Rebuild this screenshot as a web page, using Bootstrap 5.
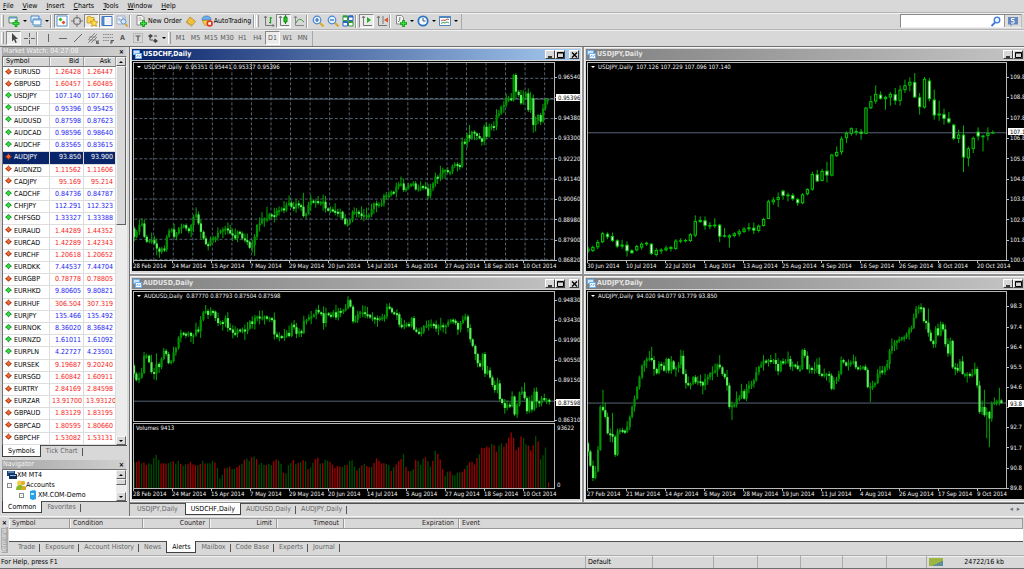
<!DOCTYPE html>
<html lang="en">
<head>
<meta charset="utf-8">
<meta name="viewport" content="width=device-width, initial-scale=1">
<title>XM MT4</title>
<link href="https://cdn.jsdelivr.net/npm/bootstrap@5.3.0/dist/css/bootstrap.min.css" rel="stylesheet">
<style>
  :root { --face:#d8d8d8; --shade:#808080; --edge:#a8a8a8; --navy:#0a246a; }
  body { min-height:100vh; background:var(--face); color:#000; font-family:"DejaVu Sans Condensed","DejaVu Sans",sans-serif; font-size:7px; line-height:10px; overflow-x:hidden; }
  button, input { font:inherit; }
  .menubar { height:12px; padding-left:3px; line-height:13px; }
  .menubar a { color:#000; text-decoration:none; padding:0 5px 0 0; margin-right:4px; }
  .menubar u { text-underline-offset:1px; }
  .toolrow { height:17px; border-top:1px solid #b4b4b4; box-shadow:inset 0 1px #f0f0f0; padding-right:2px; }
  .toolset { height:15px; border-right:1px solid var(--edge); padding-right:2px; }
  .btn.tool { --bs-btn-padding-x:0; --bs-btn-padding-y:0; --bs-btn-font-size:7px; --bs-btn-line-height:10px; --bs-btn-border-radius:0; --bs-btn-color:#000; width:15px; height:14px; border:1px solid transparent; display:flex; align-items:center; justify-content:center; gap:1px; flex:none; white-space:nowrap; }
  .btn.tool.pressed { background:#ececec; border-color:#888 #fff #fff #888; }
  .btn.tool.drop { width:22px; gap:3px; }
  .btn.tool.wordy { width:auto; padding:0 1px; }
  .btn.tool.period { color:#555; }
  .btn.tool.period.w16 { width:16px; }
  .tool svg { width:12px; height:12px; flex:none; }
  .caret { border:2px solid transparent; border-top-color:#000; border-bottom:0; }
  .grip { width:3px; height:12px; border-left:1px solid #fff; border-right:1px solid #999; margin:0 2px 0 1px; flex:none; }
  .rule { width:2px; height:13px; border-left:1px solid #999; border-right:1px solid #fff; margin:0 2px 0 0; flex:none; }
  .finder { width:122px; height:14px; border:1px solid #888; border-right-color:#bbb; border-bottom-color:#eee; }
  .finder input { border:0; outline:0; min-width:0; padding:0 3px; background:#fff; }
  .finder label { background:#fff; width:14px; }
  .finder svg { width:12px; height:11px; }
  .finder button { border:0; border-left:1px solid #999; background:#dcdcdc; width:17px; padding:0; }

  main { border-top:1px solid #707070; min-height:0; }
  .dock { width:130px; padding:0 2px; border-right:1px solid #707070; flex:none; }
  .dock-title { height:9px; background:linear-gradient(90deg,#a8a8a8,#d0d0d0); color:#f4f4f4; line-height:8px; padding-left:1px; margin-right:1px; }
  .dock-title.second { margin-top:3px; }
  .xbtn { border:0; background:none; padding:0; width:9px; height:9px; line-height:8px; font-weight:bold; color:#000; }
  .sunk { border:1px solid #707070; border-right-color:#eee; border-bottom:0; background:#fff; }
  .quotes { border-collapse:separate; border-spacing:0; width:115px; table-layout:fixed; line-height:11px; }
  .quotes th { height:10px; line-height:9px; background:var(--face); font-weight:normal; border-right:1px solid #999; border-bottom:1px solid #777; box-shadow:inset 1px 1px #f2f2f2; padding:0 4px 0 3px; }
  .quotes td { border-right:1px solid #ddd; border-bottom:1px solid #ddd; padding:0 2px; text-align:right; vertical-align:middle; white-space:nowrap; overflow:hidden; }
  .quotes td:first-child { text-align:left; }
  .quotes td svg { width:7px; height:7px; margin:0 2px 2px 0; vertical-align:middle; }
  .quotes .up td { color:#2020f0; } .quotes .down td { color:#f42020; }
  .quotes tr td:first-child { color:#000; }
  .quotes .picked td, .quotes .picked td:first-child { background:var(--navy); color:#fff; }
  .scroller { width:10px; background:#ececec; }
  .scroller button, .thumb { width:10px; height:9px; padding:0; border:1px solid #f4f4f4; border-right-color:#606060; border-bottom-color:#606060; background:var(--face); display:flex; align-items:center; justify-content:center; flex:none; }
  .scroller .thumb { height:auto; }
  .tri { border:2px solid transparent; border-top:0; border-bottom-color:#000; }
  .tri.dn { border-bottom:0; border-top:2px solid #000; }
  .tabstrip { height:12px; border-top:1px solid #505050; color:#666; line-height:11px; }
  .dock .tabstrip.last { margin-bottom:3px; }
  .tabstrip a { color:#666; text-decoration:none; padding:0 5px; white-space:nowrap; position:relative; }
  .tabstrip a.bar::after { content:""; border-right:1px solid #555; position:absolute; right:0; top:2px; height:8px; }
  .tabstrip a.on { background:#fff; color:#000; border:1px solid #404040; border-top:0; margin-top:-1px; line-height:12px; height:12px; }
  .tree { height:31px; overflow:hidden; line-height:10px; }
  .tree svg { width:10px; height:10px; flex:none; }
  .box { width:5px; height:5px; border:1px solid #888; line-height:3px; font-size:5px; text-align:center; flex:none; }

  .desk { background:#909090; display:grid; gap:2px; padding-bottom:1px; grid-template-columns:minmax(0,452fr) minmax(0,440fr); grid-template-rows:minmax(160px,228fr) minmax(160px,226fr); min-width:0; }
  .pane { background:var(--face); border:1px solid #f4f4f4; padding:1px 1px 2px; min-width:0; min-height:0; }
  .pane.edge { border-right:0; padding-right:0; }
  .pane-title { height:11px; background:linear-gradient(90deg,#808080,#c4c4c4); color:#e4e4e4; font-weight:bold; line-height:11px; padding:0 1px; }
  .pane.active .pane-title { background:linear-gradient(90deg,#0a246a,#a6caf0); color:#fff; }
  .pane-title svg.wi { width:9px; height:9px; margin-right:1px; }
  .wbtn { width:10px; height:9px; padding:0; border:1px solid #fff; border-right-color:#404040; border-bottom-color:#404040; background:var(--face); display:flex; align-items:center; justify-content:center; }
  .wbtn svg { width:7px; height:6px; }
  .chart { background:#000; color:#f0f0f0; margin-top:1px; padding:1px 0 0 1px; font-size:6px; line-height:8px; display:grid; grid-template-columns:minmax(0,1fr) 25px; grid-template-rows:minmax(0,1fr) 10px; position:relative; flex:1; min-height:0; }
  .edge .chart { grid-template-columns:minmax(0,1fr) 17px; }
  .plot { position:relative; min-height:0; min-width:0; display:flex; flex-direction:column; }
  .plot svg { width:100%; height:100%; min-height:0; border:1px solid #b8b8b8; display:block; }
  .plot .main { flex:133 1 0; } .plot .vol { flex:66 1 0; margin-top:1px; }
  .caption { position:absolute; left:4px; top:1px; display:flex; align-items:center; gap:3px; white-space:nowrap; }
  .caption.lower { left:3px; top:67%; }
  .caption .caret { border-top-color:#fff; }
  .prices { position:relative; min-width:0; padding-top:11px; margin-bottom:-3px; overflow:hidden; white-space:nowrap; }
  .prices span::before { content:""; display:inline-block; width:2px; height:1px; background:#c0c0c0; vertical-align:middle; margin-right:1px; }
  .prices.split { padding-top:5px; padding-bottom:68px; }
  .volscale { position:absolute; left:2px; bottom:3px; height:65px; }
  .prices .volscale span::before { display:none; }
  .tag { position:absolute; left:1px; right:0; padding-left:2px; margin-top:-4px; line-height:7px; height:7px; background:#fff; color:#000; }
  .times { grid-column:1 / -1; overflow:hidden; white-space:nowrap; padding-top:1px; }
  .times span { flex:0 0 39px; position:relative; }
  .times span::before { content:""; position:absolute; left:0; top:-1px; width:1px; height:2px; background:#c0c0c0; }
  .pagetabs { height:13px; }
  .pagetabs a:first-child { padding:0 7px; }

  .terminal { border-top:1px solid #f4f4f4; padding:1px 1px 2px 0; }
  .side { width:9px; flex:none; }
  .side span { writing-mode:vertical-rl; transform:rotate(180deg); background:#a8a8a8; color:#e8e8e8; width:7px; line-height:7px; height:26px; overflow:hidden; }
  .alerts { width:100%; table-layout:fixed; border-collapse:separate; border-spacing:0; background:#fff; }
  .alerts th { height:10px; line-height:9px; background:var(--face); font-weight:normal; border:1px solid #999; border-left:0; box-shadow:inset 1px 0 #f2f2f2; padding:0 4px 0 3px; color:#2b1a1a; }
  .alerts td { height:12px; padding:0; }
  .status { height:14px; border-top:1px solid #aaa; border-bottom:1px solid #707070; line-height:13px; box-shadow:inset 0 1px #f2f2f2; white-space:nowrap; }
  .status > span { border-left:1px solid #aaa; padding-left:2px; flex:none; }
  .status > span:first-child { border:0; padding-left:1px; }
</style>
</head>
<body class="d-flex flex-column">

<svg width="0" height="0" class="position-absolute" aria-hidden="true">
  <symbol id="i-add" viewBox="0 0 12 12"><path d="M1 2h8v6H1z" fill="#eef6ee" stroke="#4c8a5a"/><path d="M1 2h8v1.500H1z" fill="#5c9fd0"/><path d="M8 5v7M4.500 8.500h7" stroke="#0a9c12" stroke-width="2.600"/><path d="M8 6v5M5.500 8.500h5" stroke="#3ce23c"/></symbol>
  <symbol id="i-profiles" viewBox="0 0 12 12"><path d="M1 1h8v6H1z" fill="#e4f0fb" stroke="#4b88c8"/><path d="M3 4h8v6H3z" fill="#f4f9ff" stroke="#4b88c8"/><path d="M3 4h8v1.500H3z" fill="#6ca6dc"/><path d="M4 11.500h8" stroke="#7aa"/></symbol>
  <symbol id="i-watch" viewBox="0 0 12 12"><path d="M1 1h10v10H1z" fill="#fff" stroke="#5590cf"/><path d="M4.500 2.500l2 2-2 2-2-2z" fill="#2fb52f"/><path d="M7.500 5.500l2 2-2 2-2-2z" fill="#e4502c"/></symbol>
  <symbol id="i-target" viewBox="0 0 12 12"><circle cx="6" cy="6" r="3.500" fill="none" stroke="#777" stroke-width="1.200"/><path d="M6 0v4M6 8v4M0 6h4M8 6h4" stroke="#777"/></symbol>
  <symbol id="i-star" viewBox="0 0 12 12"><path d="M1 2l3-1 1 1.500h3V8H1z" fill="#f8d44c" stroke="#c09020" stroke-width=".7"/><path d="M8 4l1.200 2.500 2.700.3-2 1.900.5 2.800L8 10.200 5.600 11.500l.5-2.800-2-1.900 2.700-.3z" fill="#ffdc48" stroke="#b88a18" stroke-width=".7"/></symbol>
  <symbol id="i-panel" viewBox="0 0 12 12"><path d="M1 1.500h10v9H1z" fill="#fff" stroke="#3b74bd"/><path d="M1 1.500h2.500v9H1z" fill="#4d86cc"/><path d="M5 4h5M5 6h5M5 8h5" stroke="#dde6f2"/></symbol>
  <symbol id="i-tester" viewBox="0 0 12 12"><path d="M1 1h8v8H1z" fill="#eef2f8" stroke="#9cb0c8"/><path d="M3 6V3M5 7V4M7 6V2" stroke="#7d96b8"/><circle cx="7.500" cy="6.500" r="2.500" fill="#cfe6fa" stroke="#6898c8"/><path d="M9.500 9l2 2.500" stroke="#d8a020" stroke-width="1.800"/></symbol>
  <symbol id="i-order" viewBox="0 0 12 12"><path d="M2 .5h5l2 2V10H2z" fill="#f8f8f8" stroke="#888"/><path d="M3.500 3h3M3.500 5h4" stroke="#aaa"/><path d="M8.500 5v7M5 8.500h7" stroke="#0a9c12" stroke-width="2.600"/><path d="M8.500 6v5M6 8.500h5" stroke="#3ce23c"/></symbol>
  <symbol id="i-meta" viewBox="0 0 12 12"><path d="M1.500 7L5 2l5.500 4.500-3.500 4z" fill="#f0c040" stroke="#b88418" stroke-width=".8"/><path d="M1.500 7l5.500 3.500v1L1.500 8z" fill="#fff4c0" stroke="#a87810" stroke-width=".5"/></symbol>
  <symbol id="i-auto" viewBox="0 0 12 12"><path d="M1 5q0-4 4.500-4T10 5z" fill="#6cb0e8" stroke="#3a78b8" stroke-width=".7"/><path d="M1 5.500h8.500L8 9.500l-4 1z" fill="#f4cc50" stroke="#b88a20" stroke-width=".7"/><circle cx="8.700" cy="8.500" r="3.200" fill="#e03820"/><path d="M7.300 7.200H10v2.600H7.300z" fill="#fff"/></symbol>
  <symbol id="i-bars" viewBox="0 0 12 12"><path d="M2.500 1v9.500H11M1 3l1.500-2L4 3M9.500 9l1.500 1.500L9.500 12" fill="none" stroke="#777"/><path d="M7.500 2v6.500M6 7.500h1.500M7.500 3H9" stroke="#16a016" stroke-width="1.200"/></symbol>
  <symbol id="i-candles" viewBox="0 0 12 12"><path d="M2.500 1v9.500H11M1 3l1.500-2L4 3" fill="none" stroke="#777"/><path d="M7.500 0v9" stroke="#0c860c"/><path d="M6 2h3v5H6z" fill="#2ac82a" stroke="#0c860c"/></symbol>
  <symbol id="i-line" viewBox="0 0 12 12"><path d="M2.500 1v9.500H11M1 3l1.500-2L4 3" fill="none" stroke="#888"/><path d="M3 8q3-7 8-1" fill="none" stroke="#3a9c3a"/></symbol>
  <symbol id="i-zin" viewBox="0 0 12 12"><path d="M7.500 7.500l4 4" stroke="#d8a828" stroke-width="2"/><circle cx="5" cy="5" r="3.800" fill="#e4f2ff" stroke="#4a88d0" stroke-width="1.200"/><path d="M5 3v4M3 5h4" stroke="#2c68c0" stroke-width="1.200"/></symbol>
  <symbol id="i-zout" viewBox="0 0 12 12"><path d="M7.500 7.500l4 4" stroke="#d8a828" stroke-width="2"/><circle cx="5" cy="5" r="3.800" fill="#e4f2ff" stroke="#4a88d0" stroke-width="1.200"/><path d="M3 5h4" stroke="#2c68c0" stroke-width="1.200"/></symbol>
  <symbol id="i-tile" viewBox="0 0 12 12"><path d="M1 1h4.500v4.500H1zM6.500 6.500H11V11H6.500z" fill="#fff" stroke="#2f9c3c"/><path d="M6.500 1H11v4.500H6.500zM1 6.500h4.500V11H1z" fill="#fff" stroke="#2c64c0"/><path d="M1 1.500h4.500M6.500 7H11" stroke="#2f9c3c" stroke-width="2"/><path d="M6.500 1.500H11M1 7h4.500" stroke="#2c64c0" stroke-width="2"/></symbol>
  <symbol id="i-scroll" viewBox="0 0 12 12"><path d="M2.500 1v9.500H11M1 3l1.500-2L4 3" fill="none" stroke="#777"/><path d="M6 2l4 3-4 3z" fill="#22b022"/></symbol>
  <symbol id="i-shift" viewBox="0 0 12 12"><path d="M2.500 1v9.500H11M1 3l1.500-2L4 3M7 1v8" fill="none" stroke="#777"/><path d="M12 2.500L8 5l4 2.500z" fill="#d8542c"/></symbol>
  <symbol id="i-ind" viewBox="0 0 12 12"><path d="M1.500.5h5l2 2V9h-7z" fill="#f4f4f4" stroke="#888"/><path d="M3 7q2 0 2-5" stroke="#777" fill="none"/><path d="M8.500 5v7M5 8.500h7" stroke="#0a9c12" stroke-width="2.600"/><path d="M8.500 6v5M6 8.500h5" stroke="#3ce23c"/></symbol>
  <symbol id="i-clock" viewBox="0 0 12 12"><circle cx="6" cy="6" r="4.700" fill="#f4faff" stroke="#2c74c4" stroke-width="1.800"/><path d="M6 3v3h2.500" fill="none" stroke="#456"/></symbol>
  <symbol id="i-tpl" viewBox="0 0 12 12"><path d="M.5 1.500h11v9H.5z" fill="#fff" stroke="#4f86bb"/><path d="M.5 2h11" stroke="#4f86bb" stroke-width="2"/><path d="M2 6l2-1 2 .5L8 4l2 .5" stroke="#c05040" fill="none"/><path d="M2 8.500l2-1 2 .5L8 7l2 1" stroke="#40a050" fill="none"/></symbol>
  <symbol id="i-arrow" viewBox="0 0 12 12"><path d="M4 1v8.500l2-2 1.400 3.500 1.400-.6L7.400 7H10z" fill="#444"/></symbol>
  <symbol id="i-cross" viewBox="0 0 12 12"><path d="M6.500 1v4M6.500 8v4M1 6.500h4M8 6.500h4M6 6.500h1" stroke="#666"/></symbol>
  <symbol id="i-v" viewBox="0 0 12 12"><path d="M6.500 2v8" stroke="#666"/></symbol>
  <symbol id="i-h" viewBox="0 0 12 12"><path d="M2 6.500h8" stroke="#666"/></symbol>
  <symbol id="i-s" viewBox="0 0 12 12"><path d="M2 10l8-8" stroke="#666"/></symbol>
  <symbol id="i-ch" viewBox="0 0 12 12"><path d="M1 8l7-7M1 11l9-9M4 11l6-6M2 5h7M2 8h7" stroke="#777" stroke-width=".8"/><path d="M12 9H9.500v2.500H12M9.500 10.200H12" fill="none" stroke="#444" stroke-width=".8"/></symbol>
  <symbol id="i-fib" viewBox="0 0 12 12"><path d="M1 2.500h10M1 5.500h10M1 8.500h6" stroke="#888" stroke-dasharray="1.500 .7"/><path d="M9 12V8.500h3M9 10h2" stroke="#555" fill="none"/></symbol>
  <symbol id="i-T" viewBox="0 0 12 12"><path d="M1.500 1.500h9v9h-9z" fill="none" stroke="#999" stroke-dasharray="1 1"/><path d="M3.500 4h5M6 4v5" stroke="#555" stroke-width="1.200"/></symbol>
  <symbol id="i-arrows" viewBox="0 0 12 12"><path d="M1 4l2.500-2L6 4 3.500 6zM6 9l2-2.500L11 9l-2.500 2z" fill="#444"/><path d="M3 5v3h3M7 4h3" stroke="#555" fill="none"/></symbol>
  <symbol id="i-win" viewBox="0 0 9 9"><path d="M.5.500h6v4h-6z" fill="#cfe6fc" stroke="#6ab0ee"/><path d="M2.500 3.500h6v5h-6z" fill="#fff" stroke="#6ab0ee"/><path d="M3.500 6.500l1.500-1 1 1 1.500-1" stroke="#5a96d0" fill="none"/></symbol>
  <symbol id="i-min" viewBox="0 0 7 6"><path d="M1 5h4" stroke="#000" stroke-width="1.500"/></symbol>
  <symbol id="i-max" viewBox="0 0 7 6"><path d="M.5.500h6v5h-6z" fill="none" stroke="#000"/><path d="M.5 1h6" stroke="#000"/></symbol>
  <symbol id="i-x" viewBox="0 0 7 6"><path d="M1 .5l5 5M6 .5l-5 5" stroke="#000" stroke-width="1.400"/></symbol>
  <symbol id="q-up" viewBox="0 0 7 7"><path d="M3.500 0L7 3.300 5 4.500 3.500 6.500 2 4.500 0 3.300z" fill="#169c28"/><path d="M3.500 1L5.500 3.300 3.500 5 1.500 3.300z" fill="#3cdc48"/></symbol>
  <symbol id="q-down" viewBox="0 0 7 7"><path d="M3.500 6.800L0 3.500 2 2.300 3.500.2 5 2.300 7 3.500z" fill="#b83a14"/><path d="M3.500 1.200L5.200 3.500 3.500 5.500 1.800 3.500z" fill="#f0703c"/></symbol>
</svg>

<nav class="menubar d-flex" aria-label="Menu">
  <a href="#"><u>F</u>ile</a><a href="#"><u>V</u>iew</a><a href="#"><u>I</u>nsert</a><a href="#"><u>C</u>harts</a><a href="#"><u>T</u>ools</a><a href="#"><u>W</u>indow</a><a href="#"><u>H</u>elp</a>
</nav>

<div class="toolrow d-flex justify-content-between align-items-center">
  <div class="toolset d-flex align-items-center" role="toolbar" aria-label="Standard">
    <i class="grip"></i>
    <button class="btn tool drop" aria-label="New chart"><svg><use href="#i-add"/></svg><i class="caret"></i></button>
    <button class="btn tool drop" aria-label="Profiles"><svg><use href="#i-profiles"/></svg><i class="caret"></i></button>
    <i class="rule"></i>
    <button class="btn tool pressed" aria-label="Market Watch"><svg><use href="#i-watch"/></svg></button>
    <button class="btn tool" aria-label="Data Window"><svg><use href="#i-target"/></svg></button>
    <button class="btn tool pressed" aria-label="Navigator"><svg><use href="#i-star"/></svg></button>
    <button class="btn tool pressed" aria-label="Terminal"><svg><use href="#i-panel"/></svg></button>
    <button class="btn tool" aria-label="Strategy Tester"><svg><use href="#i-tester"/></svg></button>
    <i class="rule"></i>
    <button class="btn tool wordy"><svg><use href="#i-order"/></svg>New Order</button>
    <button class="btn tool" aria-label="MetaEditor"><svg><use href="#i-meta"/></svg></button>
    <button class="btn tool wordy"><svg><use href="#i-auto"/></svg>AutoTrading</button>
    <i class="rule me-0"></i><i class="grip"></i>
    <button class="btn tool" aria-label="Bar chart"><svg><use href="#i-bars"/></svg></button>
    <button class="btn tool pressed" aria-label="Candlesticks"><svg><use href="#i-candles"/></svg></button>
    <button class="btn tool" aria-label="Line chart"><svg><use href="#i-line"/></svg></button>
    <i class="rule"></i>
    <button class="btn tool" aria-label="Zoom in"><svg><use href="#i-zin"/></svg></button>
    <button class="btn tool" aria-label="Zoom out"><svg><use href="#i-zout"/></svg></button>
    <button class="btn tool" aria-label="Tile windows"><svg><use href="#i-tile"/></svg></button>
    <i class="rule"></i>
    <button class="btn tool pressed" aria-label="Auto scroll"><svg><use href="#i-scroll"/></svg></button>
    <button class="btn tool" aria-label="Chart shift"><svg><use href="#i-shift"/></svg></button>
    <i class="rule"></i>
    <button class="btn tool drop" aria-label="Indicators"><svg><use href="#i-ind"/></svg><i class="caret"></i></button>
    <button class="btn tool drop" aria-label="Periods"><svg><use href="#i-clock"/></svg><i class="caret"></i></button>
    <button class="btn tool drop" aria-label="Templates"><svg><use href="#i-tpl"/></svg><i class="caret"></i></button>
  </div>
  <div class="finder d-flex">
    <input id="find" type="text" class="flex-grow-1" aria-label="Search">
    <label for="find" class="d-flex align-items-center"><svg viewBox="0 0 12 11"><circle cx="7" cy="4" r="2.800" fill="#eaf3ff" stroke="#3f78d8" stroke-width="1.300"/><path d="M5 6.500L1.500 10" stroke="#3f78d8" stroke-width="1.800"/></svg></label>
    <button class="d-flex align-items-center justify-content-center" aria-label="Messages"><svg viewBox="0 0 12 11"><path d="M1 1h10v7.500H5L3.500 11V8.500H1z" fill="#6487bd"/><path d="M7.500 2.500h-3v2h2.500v2.500h-3" stroke="#fff" fill="none"/></svg></button>
  </div>
</div>

<div class="toolrow d-flex align-items-center">
  <div class="toolset d-flex align-items-center" role="toolbar" aria-label="Line studies and periods">
    <i class="grip"></i>
    <button class="btn tool pressed" aria-label="Cursor"><svg><use href="#i-arrow"/></svg></button>
    <button class="btn tool" aria-label="Crosshair"><svg><use href="#i-cross"/></svg></button>
    <i class="rule"></i>
    <button class="btn tool" aria-label="Vertical line"><svg><use href="#i-v"/></svg></button>
    <button class="btn tool" aria-label="Horizontal line"><svg><use href="#i-h"/></svg></button>
    <button class="btn tool" aria-label="Trendline"><svg><use href="#i-s"/></svg></button>
    <button class="btn tool" aria-label="Channel"><svg><use href="#i-ch"/></svg></button>
    <button class="btn tool" aria-label="Fibonacci"><svg><use href="#i-fib"/></svg></button>
    <button class="btn tool period fw-bold">A</button>
    <button class="btn tool" aria-label="Text label"><svg><use href="#i-T"/></svg></button>
    <button class="btn tool drop" aria-label="Arrows"><svg><use href="#i-arrows"/></svg><i class="caret"></i></button>
    <i class="grip"></i>
    <button class="btn tool period">M1</button><button class="btn tool period">M5</button><button class="btn tool period w16">M15</button><button class="btn tool period w16">M30</button><button class="btn tool period">H1</button><button class="btn tool period">H4</button><button class="btn tool period pressed">D1</button><button class="btn tool period">W1</button><button class="btn tool period">MN</button>
  </div>
</div>

<main class="d-flex flex-grow-1">
  <aside class="dock d-flex flex-column">
    <div class="dock-title d-flex justify-content-between"><span>Market Watch: 04:27:08</span><button class="xbtn" aria-label="Close Market Watch">×</button></div>
    <div class="sunk d-flex flex-grow-1">
      <table class="quotes">
        <colgroup><col style="width:47px"><col style="width:34px"><col></colgroup>
        <thead><tr><th>Symbol</th><th class="text-end">Bid</th><th class="text-end">Ask</th></tr></thead>
        <tbody id="quotes"></tbody>
      </table>
      <div class="scroller d-flex flex-column">
        <button aria-label="Scroll up"><i class="tri"></i></button>
        <div class="thumb" style="flex:0 0 41%"></div>
        <button class="mt-auto" aria-label="Scroll down"><i class="tri dn"></i></button>
      </div>
    </div>
    <nav class="tabstrip d-flex"><a href="#" class="on">Symbols</a><a href="#" class="bar">Tick Chart</a></nav>
    <div class="dock-title second d-flex justify-content-between"><span>Navigator</span><button class="xbtn" aria-label="Close Navigator">×</button></div>
    <div class="sunk d-flex">
      <div class="tree flex-grow-1">
        <div class="d-flex ps-1"><svg viewBox="0 0 10 10"><path d="M0 1h8v5H0z" fill="#1a3f78"/><path d="M2 4h8v5H2z" fill="#122c58"/><path d="M1 2h6M3 5.500h6" stroke="#8cc4f0"/></svg>XM MT4</div>
        <div class="d-flex align-items-center ps-1"><i class="box me-1">-</i><svg viewBox="0 0 10 10"><circle cx="3.500" cy="3" r="2.500" fill="#f0cf48"/><circle cx="7" cy="3" r="2.200" fill="#e0b030"/><path d="M0 10q0-5 4-5t4 5z" fill="#88b828"/><path d="M5 10q0-4 3-4t2 4z" fill="#d8a828"/></svg>Accounts</div>
        <div class="d-flex align-items-center ps-3"><i class="box me-1">-</i><svg viewBox="0 0 10 10"><path d="M2 1l4-1 2 1v8l-3 1-3-1z" fill="#28a0e8"/><path d="M3 3h3v2H3z" fill="#c0e8ff"/></svg>XM.COM-Demo</div>
      </div>
      <div class="scroller d-flex flex-column">
        <button aria-label="Scroll up"><i class="tri"></i></button>
        <div class="thumb" style="flex:0 0 20%"></div>
        <button class="mt-auto" aria-label="Scroll down"><i class="tri dn"></i></button>
      </div>
    </div>
    <nav class="tabstrip last d-flex"><a href="#" class="on">Common</a><a href="#" class="bar">Favorites</a></nav>
  </aside>

  <section class="flex-grow-1 d-flex flex-column" style="min-width:0">
    <div class="desk flex-grow-1" id="desk"></div>
    <nav class="tabstrip pagetabs d-flex">
      <a href="#">USDJPY,Daily</a><a href="#" class="on">USDCHF,Daily</a><a href="#" class="bar">AUDUSD,Daily</a><a href="#" class="bar">AUDJPY,Daily</a>
      <span class="ms-auto pe-1 text-secondary">◂&nbsp; ▸</span>
    </nav>
  </section>
</main>

<section class="terminal d-flex">
  <div class="side d-flex flex-column align-items-center"><button class="xbtn" aria-label="Close Terminal">×</button><span>Terminal</span></div>
  <div class="flex-grow-1">
    <table class="alerts">
      <colgroup><col style="width:61px"><col style="width:73px"><col style="width:67px"><col style="width:67px"><col style="width:67px"><col style="width:115px"><col></colgroup>
      <thead><tr><th>Symbol</th><th>Condition</th><th class="text-end">Counter</th><th class="text-end">Limit</th><th class="text-end">Timeout</th><th class="text-end">Expiration</th><th>Event</th></tr></thead>
      <tbody><tr><td colspan="7"></td></tr></tbody>
    </table>
    <nav class="tabstrip d-flex ps-1">
      <a href="#" class="bar">Trade</a><a href="#" class="bar">Exposure</a><a href="#" class="bar">Account History</a><a href="#">News</a><a href="#" class="on">Alerts</a><a href="#" class="bar">Mailbox</a><a href="#" class="bar">Code Base</a><a href="#" class="bar">Experts</a><a href="#" class="bar">Journal</a>
    </nav>
  </div>
</section>

<footer class="status d-flex">
  <span class="flex-grow-1" style="flex-shrink:1">For Help, press F1</span>
  <span style="width:67px">Default</span><span style="width:61px"></span><span style="width:44px"></span><span style="width:43px"></span><span style="width:42px"></span><span style="width:44px"></span><span style="width:40px"></span>
  <span class="d-flex align-items-center justify-content-between pe-1" style="width:98px"><svg width="14" height="8" viewBox="0 0 14 8"><path d="M0 0h14v8H0z" fill="#dce8a0"/><path d="M1 0v8M3 0v8M5 0v7M7 0v6M9 0v5M11 0v4M13 0v3" stroke="#7c9a10" stroke-width="1.300"/><path d="M5 7v1M7 6v2M9 5v3M11 4v4M13 3v5" stroke="#1c5c9c" stroke-width="1.300"/></svg><span class="pe-2 me-2">24722/16 kb</span></span>
</footer>

<script src="https://cdn.jsdelivr.net/npm/bootstrap@5.3.0/dist/js/bootstrap.bundle.min.js"></script>
<script>
// Symbol, bid, ask, direction of the last tick
const quotes = `EURUSD 1.26428 1.26447 d|GBPUSD 1.60457 1.60485 d|USDJPY 107.140 107.160 u|USDCHF 0.95396 0.95425 u|AUDUSD 0.87598 0.87623 u|AUDCAD 0.98596 0.98640 u|AUDCHF 0.83565 0.83615 u|AUDJPY 93.850 93.900 d|AUDNZD 1.11562 1.11606 d|CADJPY 95.169 95.214 d|CADCHF 0.84736 0.84787 u|CHFJPY 112.291 112.323 u|CHFSGD 1.33327 1.33388 u|EURAUD 1.44289 1.44352 d|EURCAD 1.42289 1.42343 d|EURCHF 1.20618 1.20652 d|EURDKK 7.44537 7.44704 u|EURGBP 0.78778 0.78805 d|EURHKD 9.80605 9.80821 u|EURHUF 306.504 307.319 d|EURJPY 135.466 135.492 u|EURNOK 8.36020 8.36842 u|EURNZD 1.61011 1.61092 u|EURPLN 4.22727 4.23501 u|EURSEK 9.19687 9.20240 d|EURSGD 1.60842 1.60911 d|EURTRY 2.84169 2.84598 d|EURZAR 13.91700 13.93120 d|GBPAUD 1.83129 1.83195 d|GBPCAD 1.80595 1.80660 d|GBPCHF 1.53082 1.53131 d`;
document.getElementById('quotes').innerHTML = quotes.split('|').map(q => {
  const [s, b, a, d] = q.split(' '), k = d === 'u' ? 'up' : 'down';
  return `<tr class="${k}${s === 'AUDJPY' ? ' picked' : ''}"><td><svg><use href="#q-${k}"/></svg>${s}</td><td>${b}</td><td>${a}</td></tr>`;
}).join('');

// Close of each bar as "x,y" in plot units
const usdchf = '15,570 22,555 30,535 38,530 45,570 52,585 60,580 67,580 75,590 82,605 90,615 97,605 105,608 112,570 119,552 127,548 134,570 141,560 148,545 156,540 163,535 170,545 178,553 185,535 192,510 200,503 207,530 214,555 222,575 229,592 236,595 243,580 251,572 258,572 265,558 273,552 280,548 287,545 295,550 302,560 309,565 317,575 324,555 331,560 338,575 346,580 353,585 360,603 368,595 375,570 382,535 390,530 397,518 404,515 412,515 419,503 426,505 434,507 441,492 448,490 456,485 463,490 470,475 478,468 485,480 492,485 499,470 507,475 514,480 521,508 529,500 536,475 543,462 551,465 558,463 565,465 573,465 580,465 587,485 595,492 602,488 609,492 616,495 624,500 631,495 638,515 646,532 653,530 660,520 668,497 673,495 680,495 687,500 695,508 702,505 710,505 717,505 725,487 732,470 740,472 747,472 755,470 762,447 769,445 777,445 784,435 791,437 799,420 806,412 813,410 821,430 828,425 835,415 843,412 850,410 857,428 865,425 872,418 879,420 887,425 894,447 901,425 909,410 916,390 923,393 931,380 938,370 945,370 953,375 960,375 967,358 974,352 982,355 989,360 996,285 1004,290 1011,265 1018,275 1025,255 1033,260 1040,268 1048,275 1055,285 1062,240 1069,270 1077,240 1084,238 1091,240 1099,205 1106,200 1113,180 1121,175 1128,155 1135,155 1143,160 1150,85 1157,135 1165,145 1172,170 1179,150 1187,140 1194,190 1201,155 1209,235 1216,222 1223,205 1231,225 1238,185 1245,160 1252,158';
const audusd = '15,300 22,320 30,312 38,298 45,245 52,245 60,265 67,295 75,300 82,270 90,280 97,255 104,230 111,240 118,268 126,262 133,235 140,222 148,190 155,175 163,178 170,180 177,175 185,185 192,183 200,165 207,170 214,135 222,112 229,108 236,120 244,108 251,110 258,130 266,145 273,142 280,145 288,130 295,160 302,165 310,175 317,178 324,165 332,168 339,165 346,170 354,162 361,140 368,148 376,128 383,125 390,130 398,128 405,125 412,132 420,130 427,135 434,180 442,188 449,185 456,188 464,185 471,175 478,185 486,150 493,158 500,178 508,170 515,175 522,138 530,135 537,128 544,125 552,120 559,105 566,112 574,115 581,145 588,115 596,120 603,125 610,112 618,128 625,108 632,112 640,105 647,100 654,75 661,95 669,140 676,135 683,118 690,112 698,112 705,118 712,120 720,128 727,128 734,130 742,135 749,130 756,128 763,125 770,95 778,100 785,112 792,115 800,118 807,150 814,158 822,150 829,148 836,155 844,130 851,165 858,172 866,175 873,172 880,155 888,152 895,150 902,148 910,150 917,162 924,155 931,152 938,158 946,152 953,142 961,135 968,138 975,145 982,165 990,145 997,135 1004,125 1012,160 1019,195 1026,215 1034,240 1041,268 1048,278 1056,240 1063,300 1070,290 1078,312 1085,335 1092,350 1100,330 1107,378 1114,390 1122,405 1129,395 1137,400 1144,370 1151,425 1159,395 1166,360 1173,355 1181,375 1188,415 1195,385 1203,410 1210,355 1217,385 1225,390 1232,375 1240,380 1247,380 1255,385';
const audjpy = '15,535 22,578 30,615 37,595 45,530 52,400 60,410 67,430 74,480 82,482 89,490 97,545 104,475 111,470 119,472 126,475 133,460 141,430 148,400 155,375 163,340 170,310 178,275 185,262 192,255 200,252 207,258 214,285 222,298 229,270 236,275 244,290 251,255 258,290 266,262 273,285 280,282 288,272 295,245 302,300 310,328 317,332 324,330 332,310 339,325 346,322 354,325 361,335 368,315 376,310 383,298 390,295 398,290 405,272 412,280 420,300 427,310 434,335 441,400 449,395 456,393 463,375 471,372 478,352 486,375 493,345 500,335 508,330 515,320 522,295 530,278 537,272 544,260 552,262 559,258 566,262 574,258 581,270 588,292 596,262 603,265 610,262 618,255 625,278 632,272 640,275 647,285 654,285 661,228 668,245 676,285 683,282 690,285 698,285 705,272 712,300 720,305 727,300 734,300 742,305 749,345 756,320 764,315 771,300 778,258 785,265 793,275 800,268 807,265 815,262 822,280 829,282 836,280 844,278 851,288 858,340 866,338 873,335 880,328 888,300 895,290 902,295 910,280 917,270 924,230 931,215 939,205 946,200 953,195 961,190 968,188 975,180 983,165 990,160 997,130 1004,103 1012,98 1019,100 1027,140 1034,145 1041,175 1048,200 1056,210 1063,162 1070,183 1078,150 1085,165 1092,210 1100,238 1107,200 1114,280 1122,282 1129,290 1136,262 1144,300 1151,300 1158,300 1166,305 1173,300 1181,285 1188,335 1195,415 1203,400 1210,425 1217,415 1225,435 1232,390 1240,385 1247,383 1255,380 1261,388';
// High, low, body top, body bottom, direction
const usdjpy = '600 620 607 614 u|597 617 602 613 u|580 608 587 602 u|556 590 561 587 u|558 578 562 572 d|558 587 569 583 d|578 605 582 600 d|580 607 595 600 u|585 630 595 614 d|608 622 612 620 d|595 615 599 611 u|588 610 592 603 u|586 598 589 593 u|590 626 592 622 d|605 630 611 625 u|605 622 610 614 u|597 615 604 611 u|598 615 602 607 u|578 610 583 607 u|575 590 582 585 u|577 588 581 584 u|560 587 564 583 u|507 572 524 567 u|510 530 521 526 d|510 550 522 538 d|527 548 536 540 u|515 545 535 539 u|532 587 535 570 d|545 573 567 570 d|563 603 567 573 u|557 573 561 568 u|548 570 555 563 u|542 560 547 556 u|530 555 543 548 u|528 563 544 552 d|534 558 538 553 u|514 540 518 538 u|460 518 465 517 u|452 475 460 467 u|438 482 452 460 u|430 460 433 448 d|438 465 445 449 d|440 463 446 458 d|455 478 458 470 d|440 473 444 470 u|426 447 428 443 u|376 433 383 429 u|370 405 384 405 d|367 405 374 403 u|346 408 373 387 d|322 390 325 387 u|300 332 317 329 u|270 325 277 317 u|255 290 260 275 u|243 268 246 262 u|245 267 254 258 u|248 280 256 262 d|183 263 184 262 u|148 188 165 185 u|117 172 143 165 u|135 160 145 157 d|148 190 152 158 u|137 178 143 153 u|125 175 144 163 d|117 178 130 163 u|100 140 117 131 u|93 135 107 117 u|80 155 107 153 d|140 205 153 182 d|92 187 98 183 u|95 165 103 158 d|130 220 160 207 d|163 223 202 207 u|187 235 203 217 d|197 232 216 228 d|232 282 235 277 d|250 290 265 277 u|237 377 265 333 d|300 360 306 335 u|270 320 275 307 u|243 282 256 270 d|265 315 268 272 u|243 282 260 268 u|252 262 258 260 u';
const volume = '15,557 30,558 45,555 60,570 75,550 82,535 90,560 105,565 120,560 135,565 150,555 165,570 180,565 200,570 215,560 240,560 258,558 265,585 273,608 290,575 310,585 330,570 347,548 360,555 375,545 385,565 400,570 415,562 425,570 435,545 445,550 460,585 464,603 475,570 485,555 500,570 522,545 535,580 558,545 570,565 585,555 610,570 640,575 665,555 680,583 705,570 722,585 740,550 755,560 775,575 785,583 805,550 820,540 830,590 850,580 858,550 870,575 880,540 900,575 917,523 930,550 938,598 955,588 972,605 990,590 1005,580 1020,560 1035,560 1055,513 1070,520 1085,510 1100,525 1107,495 1115,515 1130,500 1144,462 1158,530 1173,470 1188,510 1200,525 1217,475 1230,565 1240,510 1250,520';

const pts = s => s.split(' ').map(p => p.split(',').map(Number));
const hash = n => { const v = Math.sin(n * 12.9898 + 4.1) * 43758.5453; return v - Math.floor(v); };
const rect = (x, y, w, h, f, extra = '') => `<rect x="${x}" y="${y}" width="${w}" height="${h}" fill="${f}" ${extra}/>`;

function thinCandles(data, spikes = {}) {
  let prev = null;
  return pts(data).map(([x, c], i) => {
    const o = prev === null ? c - 25 : prev; prev = c;
    const top = Math.min(o, c), h = Math.max(Math.abs(o - c), 6);
    let hi = top - 3 - hash(i) ** 2 * 20, lo = top + h + 3 + hash(i + 500) ** 2 * 18;
    const s = spikes[x]; if (s) { if (s < top) hi = s; else lo = s; }
    return rect(x - 1.5, hi, 3, lo - hi, '#00a800') + rect(x - 3, top, 6.5, h, c <= o ? '#009400' : '#58f058');
  }).join('');
}
const wideCandles = data => data.split('|').map((r, i) => {
  const [hi, lo, t, b, d] = r.split(' '), x = 18 + 14.63 * i;
  return rect(x - 1.5, hi, 3, lo - hi, '#00b400') + rect(x - 3.5, +t + 1, 7, Math.max(b - t - 2, 1), d === 'u' ? '#001800' : '#fff', 'stroke="#00c800" stroke-width="3"');
}).join('');
const priceLine = y => rect(0, y, 1300, 2.5, '#66788a');
function gridLines() {
  let g = '';
  for (let x = 73; x < 1272; x += 58.5) g += `<path d="M${x} 47V645"/>`;
  for (let y = 95; y < 640; y += 60.3) g += `<path d="M0 ${y}H1300"/>`;
  return `<g stroke="#667788" stroke-width="2.500" stroke-dasharray="9 6">${g}</g>`;
}
function volumeBars() {
  const k = pts(volume); let out = '', j = 0;
  for (let i = 0; i < 169; i++) {
    const x = 15 + 7.31 * i;
    while (j < k.length - 2 && k[j + 1][0] < x) j++;
    const [a, b] = [k[j], k[j + 1]], t = Math.min((x - a[0]) / (b[0] - a[0]), 1);
    const y = a[1] + (b[1] - a[1]) * t + hash(i + 90) * 14;
    out += rect(x - 1.5, y, 4, 645 - y, hash(i + 31) > .5 ? '#004c00' : '#a00000');
  }
  return out + rect(1251, 627, 3, 16, '#a00000');
}
const fromFeb = ['28 Feb 2014','24 Mar 2014','15 Apr 2014','7 May 2014','29 May 2014','20 Jun 2014','14 Jul 2014','5 Aug 2014','27 Aug 2014','18 Sep 2014','10 Oct 2014'];
const windows = [
  { name:'USDCHF', active:1, ohlc:'0.95351 0.95441 0.95337 0.95396', box:[14,49,1257,592], line:157, tag:'0.95396', times:fromFeb,
    draw: gridLines() + priceLine(156) + thinCandles(usdchf, {375:627, 412:480, 521:438, 1209:258, 1018:235}),
    prices:['0.96540','','0.94380','0.93300','0.92220','0.91140','0.90060','0.88980','0.87900','0.86820'] },
  { name:'USDJPY', edge:1, ohlc:'107.126 107.229 107.096 107.140', box:[18,50,1254,592], line:259, tag:'107.1',
    times:['30 Jun 2014','10 Jul 2014','22 Jul 2014','1 Aug 2014','13 Aug 2014','25 Aug 2014','4 Sep 2014','16 Sep 2014','26 Sep 2014','8 Oct 2014','20 Oct 2014'],
    draw: priceLine(258) + wideCandles(usdjpy),
    prices:['109.8','108.8','107.8','106.8','105.8','104.8','103.8','102.8','101.8','100.9'] },
  { name:'AUDUSD', ohlc:'0.87770 0.87793 0.87504 0.87598', box:[15,50,1254,394], line:384, tag:'0.87598', times:fromFeb,
    draw: priceLine(383) + thinCandles(audusd, {82:238, 75:318, 229:90, 346:197, 1181:327, 1159:435, 924:182}), vol: volumeBars(),
    prices:['0.94830','0.93430','0.91990','0.90550','0.89150','','0.86310'] },
  { name:'AUDJPY', edge:1, ohlc:'94.020 94.077 93.779 93.850', box:[15,52,1260,592], line:388, tag:'93.8',
    times:['27 Feb 2014','21 Mar 2014','14 Apr 2014','6 May 2014','28 May 2014','19 Jun 2014','11 Jul 2014','4 Aug 2014','26 Aug 2014','17 Sep 2014','9 Oct 2014'],
    draw: priceLine(387) + thinCandles(audjpy, {60:348, 89:418, 207:218, 361:362, 412:243, 449:440, 866:385, 1041:102, 1210:348, 1217:495, 1225:522, 1255:342}),
    prices:['98.3','97.4','96.4','95.5','94.6','','92.7','91.7','90.8','89.8'] }
];
document.getElementById('desk').innerHTML = windows.map(w => {
  const full = w.vol ? 594 : w.box[3], at = (w.line - w.box[1]) / full * 98.5;
  const btn = (i, t) => `<button class="wbtn" aria-label="${t}"><svg><use href="#i-${i}"/></svg></button>`;
  const plot = (box, inner, c) => `<svg class="${c}" viewBox="${box.join(' ')}" preserveAspectRatio="none">${inner}</svg>`;
  return `<article class="pane d-flex flex-column${w.active ? ' active' : ''}${w.edge ? ' edge' : ''}">
    <header class="pane-title d-flex align-items-center"><svg class="wi"><use href="#i-win"/></svg>${w.name},Daily
      <span class="ms-auto d-flex">${btn('min','Minimize')}${btn('max','Maximize')}</span>${w.edge ? '' : `<span class="ps-1">${btn('x','Close')}</span>`}</header>
    <div class="chart">
      <div class="plot">${plot(w.box, w.draw, 'main')}${w.vol ? plot([15,452,1254,192], w.vol, 'vol') : ''}
        <div class="caption"><i class="caret"></i><span>${w.name},Daily&nbsp; ${w.ohlc}</span></div>
        ${w.vol ? '<div class="caption lower">Volumes 9413</div>' : ''}</div>
      <div class="prices d-flex flex-column justify-content-between${w.vol ? ' split' : ''}">${w.prices.map(p => `<span>${p || '&nbsp;'}</span>`).join('')}
        ${w.vol ? '<div class="volscale d-flex flex-column justify-content-between"><span>93622</span><span>0</span></div>' : ''}
        <b class="tag fw-normal" style="top:${at}%">${w.tag}</b></div>
      <div class="times d-flex">${w.times.map(t => `<span>${t}</span>`).join('')}</div>
    </div></article>`;
}).join('');
</script>
</body>
</html>
